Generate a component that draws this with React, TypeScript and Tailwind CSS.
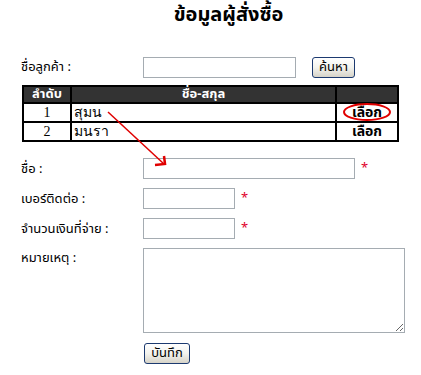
import React from 'react'

const rows = [
  { no: 1, name: 'สุมน' },
  { no: 2, name: 'มนรา' },
]

function XpButton({ label, className = '' }: { label: string; className?: string }) {
  return (
    <button
      className={`h-[21px] rounded-[3px] border border-[#1c3a70] bg-gradient-to-b from-white via-[#f3f3ee] to-[#d6d3c8] px-[5px] text-[13px] leading-none text-black ${className}`}
    >
      {label}
    </button>
  )
}

function Field({ label, width, star = true }: { label: string; width: string; star?: boolean }) {
  return (
    <div className="flex h-[30px] items-start">
      <label className="w-[122px] pt-[2px] text-[13px] leading-[18px]">{label}</label>
      <input className={`h-[21px] ${width} border border-[#a5acb2] bg-white`} />
      {star && <span className="ml-[6px] pt-[3px] text-[13px] leading-[14px] text-[#e0002a]">*</span>}
    </div>
  )
}

export default function App() {
  return (
    <div
      className="relative h-[375px] w-[421px] overflow-hidden bg-white text-black"
      style={{ fontFamily: 'Tahoma, "Noto Sans Thai", "Noto Sans", "DejaVu Sans", sans-serif' }}
    >
      {/* หัวเรื่อง */}
      <div className="flex justify-center pl-[36px] pt-[1px]">
        <h1 className="text-[20px] font-bold leading-[28px]">ข้อมูลผู้สั่งซื้อ</h1>
      </div>

      {/* ค้นหาลูกค้า */}
      <div className="mt-[28px] flex items-center pl-[21px]">
        <label className="w-[122px] text-[13px]">ชื่อลูกค้า :</label>
        <input className="h-[21px] w-[153px] border border-[#a5acb2] bg-white" />
        <XpButton label="ค้นหา" className="ml-[16px] w-[43px]" />
      </div>

      {/* ตารางลูกค้า */}
      <table className="ml-[22px] mt-[7px] w-[377px] border-collapse border-2 border-black">
        <thead>
          <tr className="h-[17px] bg-[#333333] text-[13px] font-bold leading-[15px] text-white">
            <th className="w-[48px] border-2 border-black p-0 font-bold">ลำดับ</th>
            <th className="w-[265px] border-2 border-black p-0 font-bold">ชื่อ-สกุล</th>
            <th className="border-2 border-black p-0" />
          </tr>
        </thead>
        <tbody>
          {rows.map((r) => (
            <tr key={r.no} className="h-[19px] text-[14px] leading-[16px]">
              <td className="border-2 border-black p-0 text-center font-['Liberation_Serif',serif]">{r.no}</td>
              <td className="border-2 border-black px-[2px] py-0 font-['Liberation_Serif',serif]">{r.name}</td>
              <td className="border-2 border-black p-0 text-center text-[14px] font-bold">เลือก</td>
            </tr>
          ))}
        </tbody>
      </table>

      {/* ฟอร์ม */}
      <div className="mt-[16px] pl-[21px]">
        <Field label="ชื่อ :" width="w-[212px]" />
        <Field label="เบอร์ติดต่อ :" width="w-[92px]" />
        <Field label="จำนวนเงินที่จ่าย :" width="w-[92px]" />
        <div className="flex items-start">
          <label className="w-[122px] pt-[1px] text-[13px] leading-[18px]">หมายเหตุ :</label>
          <textarea className="h-[85px] w-[262px] resize border border-[#a5acb2] bg-white" />
        </div>
        <div className="mt-[7px] pl-[123px]">
          <XpButton label="บันทึก" className="w-[46px]" />
        </div>
      </div>

      {/* เครื่องหมายกำกับ */}
      <svg className="pointer-events-none absolute left-0 top-0" width="421" height="375">
        <ellipse cx="367" cy="112" rx="23" ry="8" fill="none" stroke="#e00000" strokeWidth="2" />
        <line x1="108" y1="112" x2="164" y2="164" stroke="#e00000" strokeWidth="1.5" />
        <path d="M155 165 L165 164 L164 156" fill="none" stroke="#e00000" strokeWidth="2.5" />
      </svg>
    </div>
  )
}
